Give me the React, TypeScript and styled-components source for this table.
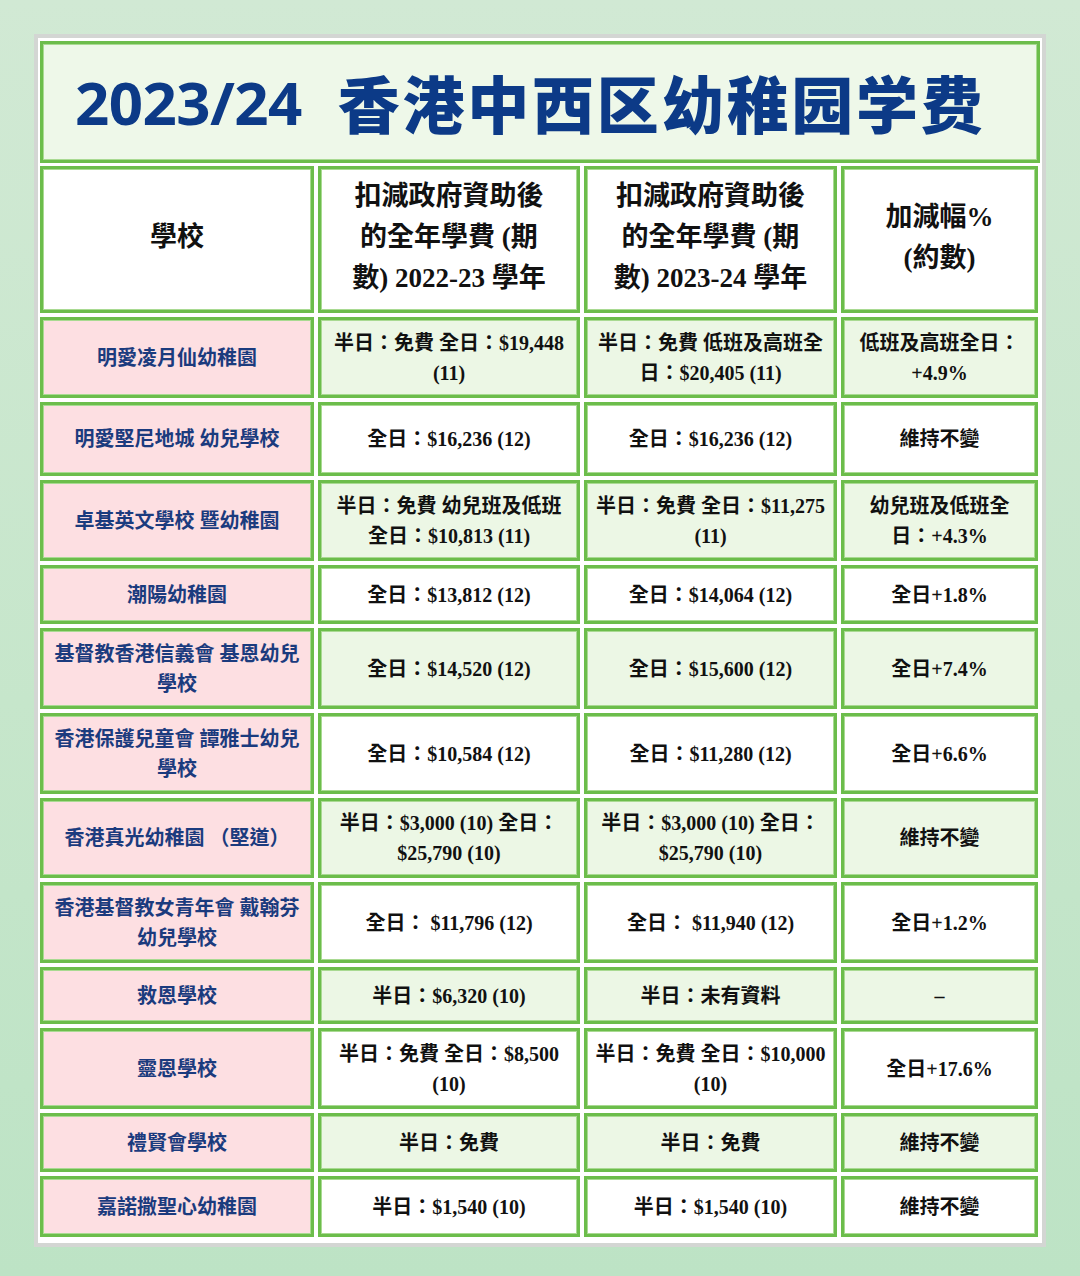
import React from 'react';
import styled, { createGlobalStyle } from 'styled-components';

const GlobalStyle = createGlobalStyle`
  * { box-sizing: border-box; }
  body {
    margin: 0;
    font-family: 'Liberation Serif', 'Noto Sans CJK TC', serif;
  }
`;

const Page = styled.div`
  width: 1080px;
  height: 1276px;
  padding: 34px 34px 0 34px;
  background: linear-gradient(180deg, #d1e9d4 0%, #c6e6cb 55%, #bde3c5 100%);
`;

const Frame = styled.div`
  width: 1012px;
  background: #ffffff;
  border: 4px solid #d3d6d3;
  padding: 3px 2px 6px 2px;
  display: flex;
  flex-direction: column;
  gap: 3px;
`;

const TitleBar = styled.div`
  height: 122px;
  background: #eef8e9;
  border: 3px solid #6cbd4b;
  box-shadow: inset 0 0 0 1px #a9da92;
  display: flex;
  align-items: center;
  padding-left: 32px;
  color: #0c3a87;
`;

const TitleYear = styled.span`
  font-family: 'Noto Sans', 'DejaVu Sans', sans-serif;
  font-weight: 700;
  font-size: 60px;
  letter-spacing: -0.6px;
  margin-right: 36px;
`;

const TitleText = styled.span`
  font-family: 'Noto Sans CJK SC', sans-serif;
  font-weight: 900;
  font-size: 62px;
  letter-spacing: 2.8px;
`;

const Table = styled.div`
  display: flex;
  flex-direction: column;
  gap: 4px;
`;

const Row = styled.div<{ $h: number }>`
  display: grid;
  grid-template-columns: 274px 262px 253px 197px;
  gap: 4px;
  height: ${(p) => p.$h}px;
`;

const Cell = styled.div<{ $bg?: string }>`
  display: flex;
  align-items: center;
  justify-content: center;
  text-align: center;
  border: 3px solid #6cbd4b;
  box-shadow: inset 0 0 0 1px #a9da92;
  background: ${(p) => p.$bg || '#ffffff'};
  font-weight: 700;
  color: #111111;
`;

const HeadCell = styled(Cell)`
  font-size: 27px;
  line-height: 41px;
  padding-bottom: 4px;
`;

const NameCell = styled(Cell)`
  background: #fddfe2;
  color: #1b3b7e;
  font-size: 20px;
  line-height: 30px;
`;

const DataCell = styled(Cell)`
  font-size: 20px;
  line-height: 30px;
`;

type Entry = { name: string[]; a: string[]; b: string[]; c: string[]; h: number };

const rows: Entry[] = [
  { name: ['明愛凌月仙幼稚園'], a: ['半日：免費 全日：$19,448', '(11)'], b: ['半日：免費 低班及高班全', '日：$20,405 (11)'], c: ['低班及高班全日：', '+4.9%'], h: 81 },
  { name: ['明愛堅尼地城 幼兒學校'], a: ['全日：$16,236 (12)'], b: ['全日：$16,236 (12)'], c: ['維持不變'], h: 74 },
  { name: ['卓基英文學校 暨幼稚園'], a: ['半日：免費 幼兒班及低班', '全日：$10,813 (11)'], b: ['半日：免費 全日：$11,275', '(11)'], c: ['幼兒班及低班全', '日：+4.3%'], h: 81 },
  { name: ['潮陽幼稚園'], a: ['全日：$13,812 (12)'], b: ['全日：$14,064 (12)'], c: ['全日+1.8%'], h: 59 },
  { name: ['基督教香港信義會 基恩幼兒', '學校'], a: ['全日：$14,520 (12)'], b: ['全日：$15,600 (12)'], c: ['全日+7.4%'], h: 81 },
  { name: ['香港保護兒童會 譚雅士幼兒', '學校'], a: ['全日：$10,584 (12)'], b: ['全日：$11,280 (12)'], c: ['全日+6.6%'], h: 81 },
  { name: ['香港真光幼稚園 （堅道）'], a: ['半日：$3,000 (10) 全日：', '$25,790 (10)'], b: ['半日：$3,000 (10) 全日：', '$25,790 (10)'], c: ['維持不變'], h: 80 },
  { name: ['香港基督教女青年會 戴翰芬', '幼兒學校'], a: ['全日： $11,796 (12)'], b: ['全日： $11,940 (12)'], c: ['全日+1.2%'], h: 81 },
  { name: ['救恩學校'], a: ['半日：$6,320 (10)'], b: ['半日：未有資料'], c: ['–'], h: 57 },
  { name: ['靈恩學校'], a: ['半日：免費 全日：$8,500', '(10)'], b: ['半日：免費 全日：$10,000', '(10)'], c: ['全日+17.6%'], h: 81 },
  { name: ['禮賢會學校'], a: ['半日：免費'], b: ['半日：免費'], c: ['維持不變'], h: 59 },
  { name: ['嘉諾撒聖心幼稚園'], a: ['半日：$1,540 (10)'], b: ['半日：$1,540 (10)'], c: ['維持不變'], h: 61 },
];

const Lines: React.FC<{ lines: string[] }> = ({ lines }) => (
  <div>
    {lines.map((l, i) => (
      <React.Fragment key={i}>
        {i > 0 && <br />}
        {l}
      </React.Fragment>
    ))}
  </div>
);

const App: React.FC = () => {
  return (
    <Page>
      <GlobalStyle />
      <Frame>
        <TitleBar>
          <TitleYear>2023/24</TitleYear>
          <TitleText>香港中西区幼稚园学费</TitleText>
        </TitleBar>
        <Table>
          <Row $h={147}>
            <HeadCell>學校</HeadCell>
            <HeadCell>
              <Lines lines={['扣減政府資助後', '的全年學費 (期', '數) 2022-23 學年']} />
            </HeadCell>
            <HeadCell>
              <Lines lines={['扣減政府資助後', '的全年學費 (期', '數) 2023-24 學年']} />
            </HeadCell>
            <HeadCell>
              <Lines lines={['加減幅%', '(約數)']} />
            </HeadCell>
          </Row>
          {rows.map((r, i) => {
            const bg = i % 2 === 0 ? '#ecf7e5' : '#ffffff';
            return (
              <Row key={i} $h={r.h}>
                <NameCell>
                  <Lines lines={r.name} />
                </NameCell>
                <DataCell $bg={bg}>
                  <Lines lines={r.a} />
                </DataCell>
                <DataCell $bg={bg}>
                  <Lines lines={r.b} />
                </DataCell>
                <DataCell $bg={bg}>
                  <Lines lines={r.c} />
                </DataCell>
              </Row>
            );
          })}
        </Table>
      </Frame>
    </Page>
  );
};

export default App;
